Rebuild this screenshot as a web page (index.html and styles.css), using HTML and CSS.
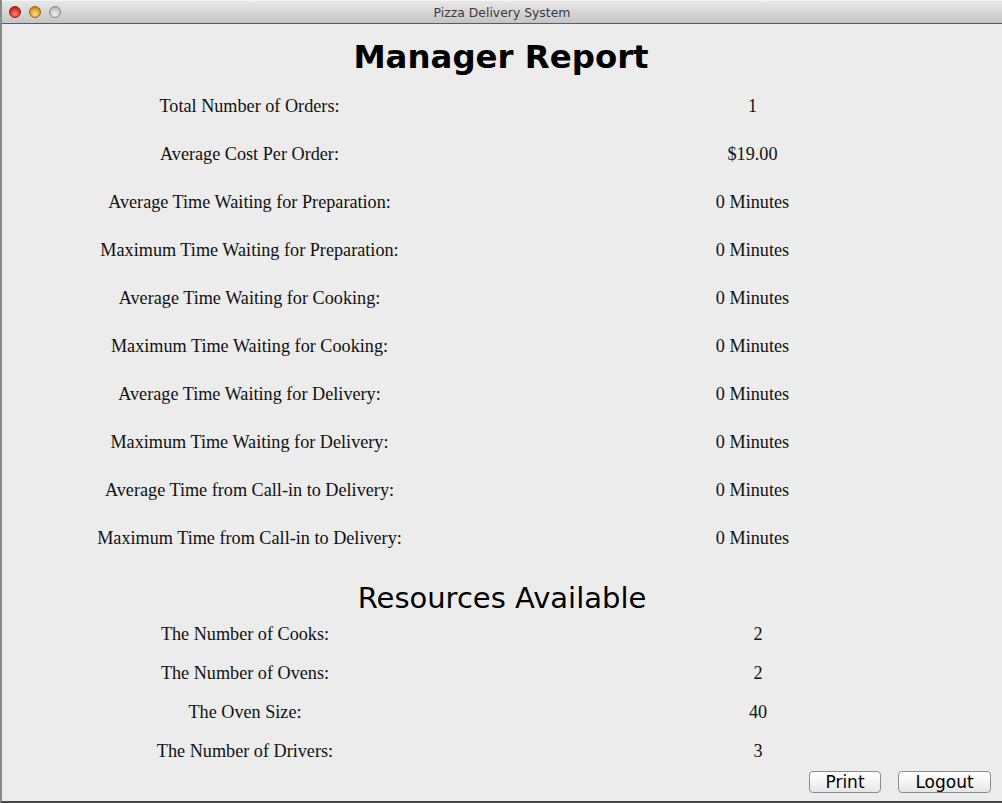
FILE: index.html
```html
<!DOCTYPE html>
<html>
<head>
<meta charset="utf-8">
<link rel="stylesheet" href="styles.css">
</head>
<body>
<div class="window">
  <div class="titlebar">
    <div class="lights">
      <span class="light red"></span>
      <span class="light yellow"></span>
      <span class="light gray"></span>
    </div>
    <div class="wtitle">Pizza Delivery System</div>
  </div>
  <div class="content">
    <h1 class="title">Manager Report</h1>
    <div class="report">
      <div class="lbl">Total Number of Orders:</div><div class="val">1</div>
      <div class="lbl">Average Cost Per Order:</div><div class="val">$19.00</div>
      <div class="lbl">Average Time Waiting for Preparation:</div><div class="val">0 Minutes</div>
      <div class="lbl">Maximum Time Waiting for Preparation:</div><div class="val">0 Minutes</div>
      <div class="lbl">Average Time Waiting for Cooking:</div><div class="val">0 Minutes</div>
      <div class="lbl">Maximum Time Waiting for Cooking:</div><div class="val">0 Minutes</div>
      <div class="lbl">Average Time Waiting for Delivery:</div><div class="val">0 Minutes</div>
      <div class="lbl">Maximum Time Waiting for Delivery:</div><div class="val">0 Minutes</div>
      <div class="lbl">Average Time from Call-in to Delivery:</div><div class="val">0 Minutes</div>
      <div class="lbl">Maximum Time from Call-in to Delivery:</div><div class="val">0 Minutes</div>
    </div>
    <h2 class="subtitle">Resources Available</h2>
    <div class="resources">
      <div class="lbl">The Number of Cooks:</div><div class="val">2</div>
      <div class="lbl">The Number of Ovens:</div><div class="val">2</div>
      <div class="lbl">The Oven Size:</div><div class="val">40</div>
      <div class="lbl">The Number of Drivers:</div><div class="val">3</div>
    </div>
    <div class="buttons">
      <button class="btn print">Print</button>
      <button class="btn logout">Logout</button>
    </div>
  </div>
</div>
</body>
</html>
```
FILE: styles.css
```css
html, body {
  margin: 0;
  padding: 0;
  background: #ececec;
}
.window {
  width: 1002px;
  height: 803px;
  box-sizing: border-box;
  border-left: 2px solid #8a8a8a;
  border-bottom: 2px solid #4a4a4a;
  background: #ececec;
  display: flex;
  flex-direction: column;
  overflow: hidden;
}
.titlebar {
  height: 22px;
  flex: none;
  background: linear-gradient(#e8e8e8, #d3d3d3 60%, #c4c4c4);
  border-bottom: 1px solid #5c5c5c;
  position: relative;
  display: flex;
  align-items: center;
  justify-content: center;
  border-top: 1px solid #f4f4f4;
}
.lights {
  position: absolute;
  left: 7px;
  top: 5px;
  display: flex;
  gap: 8px;
}
.light {
  width: 12px;
  height: 12px;
  border-radius: 50%;
  box-sizing: border-box;
  display: block;
}
.red {
  background: radial-gradient(circle at 50% 70%, #ff8a80 0%, #e0322a 55%, #a01010 100%);
  border: 1px solid #8e2020;
}
.yellow {
  background: radial-gradient(circle at 50% 70%, #ffe08a 0%, #e8a12a 55%, #a0650a 100%);
  border: 1px solid #946018;
}
.gray {
  background: radial-gradient(circle at 50% 70%, #f2f2f2 0%, #c8c8c8 55%, #9a9a9a 100%);
  border: 1px solid #8a8a8a;
}
.wtitle {
  font-family: "DejaVu Sans", sans-serif;
  font-size: 12.4px;
  color: #3a3a3a;
  padding-top: 1px;
}
.content {
  flex: 1;
  display: flex;
  flex-direction: column;
}
.title {
  margin: 11px 0 0;
  text-align: center;
  font-family: "DejaVu Sans", sans-serif;
  font-weight: bold;
  font-size: 32.4px;
  line-height: 44px;
  color: #000;
  padding-right: 2px;
}
.report, .resources {
  display: grid;
  font-family: "Liberation Serif", serif;
  font-size: 18.2px;
  color: #111;
}
.report {
  grid-template-columns: 495px 1fr;
  margin-top: 3px;
  grid-auto-rows: 48px;
}
.lbl, .val {
  text-align: center;
  display: flex;
  align-items: center;
  justify-content: center;
}
.report .val {
  padding-left: 6px;
}
.subtitle {
  margin: 16px 0 0;
  text-align: center;
  font-family: "DejaVu Sans", sans-serif;
  font-weight: normal;
  font-size: 29px;
  line-height: 40px;
  color: #000;
}
.resources {
  grid-template-columns: 486px 1fr;
  grid-auto-rows: 39px;
  margin-top: -3px;
}
.resources .val {
  padding-left: 26px;
}
.buttons {
  display: flex;
  justify-content: flex-end;
  gap: 17px;
  padding-right: 11px;
  margin-top: 0;
}
.btn {
  height: 22px;
  border: 1px solid #8d8d8d;
  border-radius: 4px;
  background: linear-gradient(#ffffff, #f4f4f4 50%, #e6e6e6);
  font-family: "DejaVu Sans", sans-serif;
  font-size: 17px;
  line-height: 18px;
  color: #000;
  padding: 0;
}
.print { width: 72px; }
.logout { width: 93px; }
```
